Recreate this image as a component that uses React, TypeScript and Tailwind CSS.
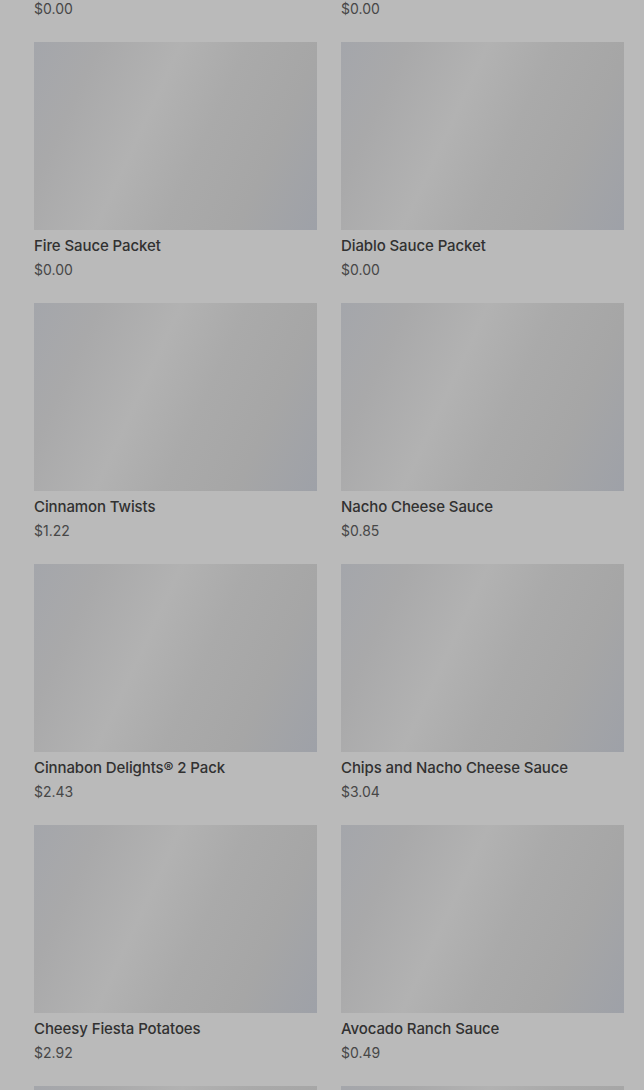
import React from 'react';

interface MenuItem {
  name?: string;
  price?: string;
}

// First row is scrolled mostly out of view, last row only shows the top of its photo
const items: MenuItem[] = [
  { price: '$0.00' },
  { price: '$0.00' },
  { name: 'Fire Sauce Packet', price: '$0.00' },
  { name: 'Diablo Sauce Packet', price: '$0.00' },
  { name: 'Cinnamon Twists', price: '$1.22' },
  { name: 'Nacho Cheese Sauce', price: '$0.85' },
  { name: 'Cinnabon Delights® 2 Pack', price: '$2.43' },
  { name: 'Chips and Nacho Cheese Sauce', price: '$3.04' },
  { name: 'Cheesy Fiesta Potatoes', price: '$2.92' },
  { name: 'Avocado Ranch Sauce', price: '$0.49' },
  {},
  {},
];

const ItemCard: React.FC<{ item: MenuItem }> = ({ item }) => (
  <div className="flex flex-col">
    {/* Loading placeholder for the product photo */}
    <div className="h-[188px] w-full bg-[linear-gradient(115deg,#a4a6ab_0%,#a9a9aa_18%,#b2b2b2_40%,#aaaaaa_58%,#a6a6a6_78%,#9ea1a8_100%)]" />
    <div className="pt-[6px]">
      <div className="h-5 text-[15px] leading-5 font-medium tracking-[-0.1px] text-[#313131]">
        {item.name}
      </div>
      <div className="mt-1 h-5 text-[14px] leading-5 text-[#474747]">{item.price}</div>
    </div>
  </div>
);

export default function App() {
  return (
    <div
      className="h-[1090px] w-[644px] overflow-hidden bg-[#bababa]"
      style={{ fontFamily: 'Inter, "Noto Sans", sans-serif' }}
    >
      <div className="-mt-[219px] grid grid-cols-[283px_283px] gap-x-6 gap-y-[23px] pl-[34px]">
        {items.map((item, i) => (
          <ItemCard key={i} item={item} />
        ))}
      </div>
    </div>
  );
}
